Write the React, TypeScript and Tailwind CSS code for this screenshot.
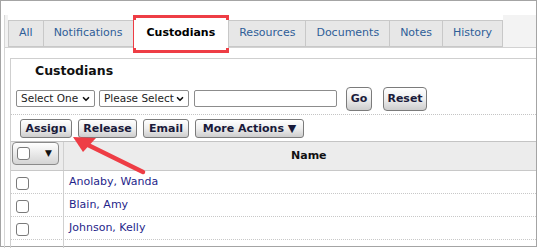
import { ChevronDown } from "lucide-react";

const tabs = ["All", "Notifications", "Custodians", "Resources", "Documents", "Notes", "History"];
const people = ["Anolaby, Wanda", "Blain, Amy", "Johnson, Kelly", ""];

const btn =
  "flex items-center justify-center rounded-[3px] border border-[#7b7b7b] bg-gradient-to-b from-white via-[#eeeeee] to-[#cdcdcd] px-[6px] text-[11px] font-bold leading-none text-[#1a1a3a] shadow-[inset_0_1px_0_#fff]";

const Select = ({ label, width }: { label: string; width: string }) => (
  <div
    className={`flex h-[17px] items-center justify-between rounded-[2px] border border-[#8c8c8c] bg-white pl-[4px] pr-[3px] text-[10.5px] text-[#222] ${width}`}
  >
    <span>{label}</span>
    <ChevronDown size={10} strokeWidth={4} color="#111" />
  </div>
);

const Checkbox = () => (
  <span className="block h-[13px] w-[13px] rounded-[3px] border border-[#7a7a7a] bg-white" />
);

export default function App() {
  return (
    <div className="relative h-[248px] w-[538px] overflow-hidden bg-white font-['DejaVu_Sans',sans-serif]">
      <div className="flex h-[247px] w-[537px] flex-col border border-[#a4a4a4] pl-[3px] pt-[14px]">
        <div className="flex flex-1 flex-col border-l border-[#d6d6d6]">
          {/* Tabs */}
          <div className="flex h-[33px] border-b border-[#d2d2d2]">
            <div className="w-[3px] bg-[#f2f2f2]" />
            <div className="flex items-end">
              {tabs.map((t, i) =>
                t === "Custodians" ? (
                  <div
                    key={t}
                    className="relative z-10 -mb-px flex h-[28px] items-center border-r border-[#c8c8c8] bg-white px-[13px] pb-[2px] text-[11px] font-bold text-black"
                  >
                    {t}
                  </div>
                ) : (
                  <div
                    key={t}
                    className={`flex h-[27px] items-center border-b border-r border-t border-[#c8c8c8] bg-[#e7e7e7] px-[10px] text-[11px] text-[#2f5e98] ${
                      i === 0 ? "border-l" : ""
                    }`}
                  >
                    {t}
                  </div>
                )
              )}
            </div>
            <div className="flex-1 bg-[#f3f3f3]" />
          </div>

          {/* Panel body */}
          <div className="flex flex-1 flex-col pl-[5px] pt-[10px]">
            <div className="flex flex-1 flex-col border-l border-t border-[#cfcfcf]">
              <div className="flex h-[24px] items-center pl-[24px] text-[12.5px] font-bold text-[#111]">
                Custodians
              </div>

              {/* Filters */}
              <div className="flex h-[32px] shrink-0 items-center border-b border-dotted border-[#c4c4c4] pl-[5px]">
                <Select label="Select One" width="w-[79px]" />
                <div className="w-[4px]" />
                <Select label="Please Select" width="w-[90px]" />
                <div className="ml-[5px] h-[17px] w-[143px] rounded-[2px] border border-[#8c8c8c] bg-white" />
                <button className={`${btn} ml-[9px] h-[24px] w-[26px] rounded-[4px] px-0`}>Go</button>
                <button className={`${btn} ml-[11px] h-[24px] w-[44px] rounded-[4px] px-0`}>Reset</button>
              </div>

              {/* Actions */}
              <div className="flex h-[27px] shrink-0 items-center gap-[6px] border-b border-[#c4c4c4] pl-[9px]">
                <button className={`${btn} h-[19px] w-[52px]`}>Assign</button>
                <button className={`${btn} h-[19px] w-[59px]`}>Release</button>
                <button className={`${btn} h-[19px] w-[46px]`}>Email</button>
                <button className={`${btn} h-[19px] w-[109px]`}>More Actions ▼</button>
              </div>

              {/* Table header */}
              <div className="flex h-[29px] shrink-0 border-b border-[#c8c8c8] bg-[#ececec]">
                <div className="w-[53px] border-r border-[#d0d0d0] pl-px">
                  <div className="flex h-[23px] w-[47px] items-center justify-between rounded-[4px] border border-[#8a8a8a] bg-gradient-to-b from-white to-[#d4d4d4] pl-[4px] pr-[6px]">
                    <Checkbox />
                    <span className="text-[9px] text-[#111]">▼</span>
                  </div>
                </div>
                <div className="flex flex-1 items-center pl-[227px] text-[11px] font-bold text-[#111]">Name</div>
              </div>

              {/* Rows */}
              {people.map((p, i) => (
                <div key={i} className="flex h-[23px] shrink-0 border-b border-dotted border-[#c8c8c8]">
                  <div className="flex w-[53px] items-center border-r border-[#d0d0d0] pl-[5px] pt-[2px]">
                    {p && <Checkbox />}
                  </div>
                  <div className="flex flex-1 items-center pl-[5px] text-[11px] text-[#1f1f8a]">{p}</div>
                </div>
              ))}
            </div>
          </div>
        </div>
      </div>

      {/* Annotations */}
      <div className="absolute left-[133px] top-[15px] h-[38px] w-[96px] border-[3px] border-[#ee3d45]" />
      <svg className="pointer-events-none absolute left-0 top-0" width="538" height="248">
        <line x1="143" y1="172" x2="86" y2="144" stroke="#ee3d45" strokeWidth="4.5" strokeLinecap="round" />
        <polygon points="73,137 96,138 83,152" fill="#ee3d45" />
      </svg>
    </div>
  );
}
